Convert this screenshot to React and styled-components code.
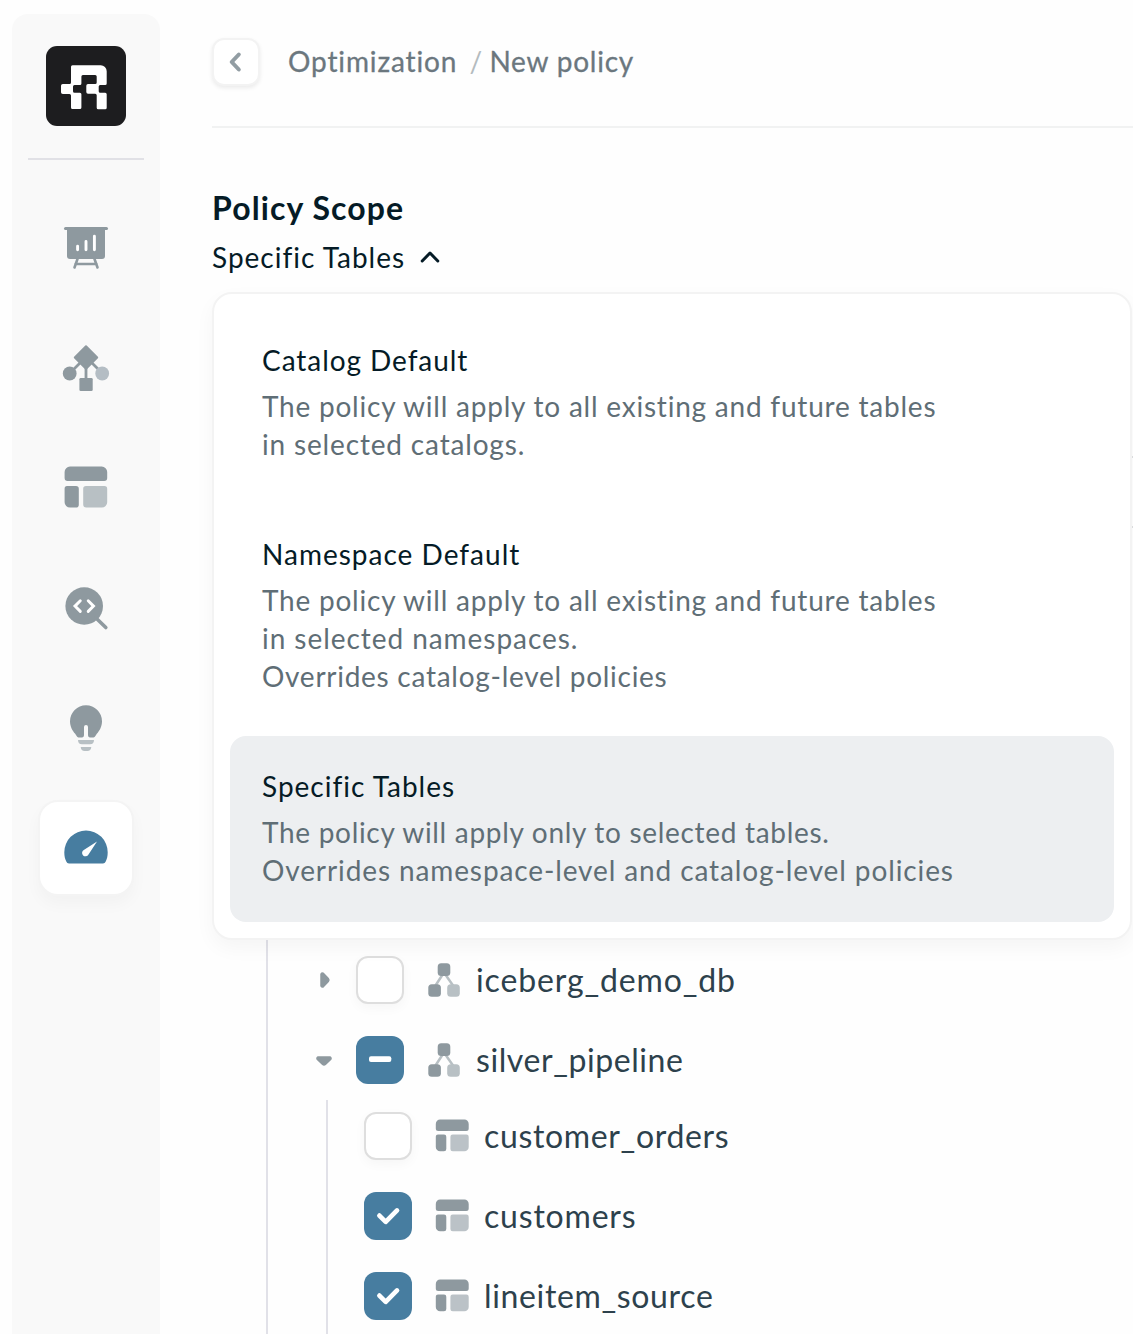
import React from 'react';
import styled, { createGlobalStyle } from 'styled-components';

const GlobalStyle = createGlobalStyle`
  * {
    box-sizing: border-box;
  }

  body {
    margin: 0;
    background: #fefefe;
    font-family: Lato, 'Open Sans', sans-serif;
    font-variant-ligatures: none;
  }

  svg {
    display: block;
    flex: none;
  }
`;

const Page = styled.div`
  display: flex;
  height: 1334px;
  padding-left: 12px;
  overflow: hidden;
`;

const Sidebar = styled.aside`
  display: flex;
  flex: none;
  flex-direction: column;
  align-items: center;
  width: 148px;
  margin-top: 14px;
  padding-top: 32px;
  border-radius: 16px 16px 0 0;
  background: #f9f9f9;
`;

const SidebarDivider = styled.div`
  width: 116px;
  height: 2px;
  margin: 32px 0 40px;
  background: #e1e1e6;
`;

const Nav = styled.nav`
  display: flex;
  flex-direction: column;
  gap: 24px;
`;

const NavItem = styled.a`
  display: flex;
  align-items: center;
  justify-content: center;
  width: 96px;
  height: 96px;
  border: 2px solid ${({ $active }) => ($active ? '#f4f4f4' : 'transparent')};
  border-radius: 20px;
  background: ${({ $active }) => ($active ? '#fff' : 'transparent')};
  box-shadow: ${({ $active }) => ($active ? '0 8px 16px rgba(0, 0, 0, 0.03)' : 'none')};
`;

const Main = styled.main`
  flex: 1;
  min-width: 0;
  padding-left: 52px;
`;

const Header = styled.header`
  display: flex;
  align-items: center;
  height: 128px;
  padding-bottom: 2px;
  border-bottom: 2px solid #f1f2f2;
`;

const BackButton = styled.button`
  width: 48px;
  height: 48px;
  padding: 0;
  border: 2px solid #f3f3f3;
  border-radius: 12px;
  background: #fff;
  box-shadow: 0 2px 4px rgba(0, 0, 0, 0.08);
`;

const Breadcrumbs = styled.div`
  display: flex;
  gap: 12px;
  margin: -2px 0 0 28px;
  font-size: 28px;
  line-height: 38px;
  color: #6b777e;
`;

const Crumb = styled.span`
  letter-spacing: ${({ $spacing }) => $spacing}px;
  -webkit-text-stroke: 0.3px #6b777e;
`;

const Slash = styled.span`
  width: 8px;
  color: #b4bbbf;
`;

const Scope = styled.section`
  position: relative;
  height: 164px;
  padding-top: 60px;
`;

const Title = styled.h1`
  margin: 0;
  font-size: 32px;
  font-weight: 700;
  line-height: 40px;
  letter-spacing: 1.1px;
  color: #051b26;
`;

const ScopeToggle = styled.div`
  display: flex;
  align-items: center;
  gap: 13px;
  height: 38px;
  margin-top: 10px;
  color: #051b26;
`;

const Label = styled.span`
  font-size: 28px;
  line-height: 38px;
  letter-spacing: ${({ $spacing }) => $spacing}px;
  white-space: nowrap;
`;

const Menu = styled.div`
  position: absolute;
  top: 164px;
  left: 0;
  z-index: 1;
  display: flex;
  flex-direction: column;
  gap: 8px;
  width: 920px;
  padding: 16px;
  border: 2px solid #f3f3f3;
  border-radius: 20px;
  background: #fff;
  box-shadow: 0 8px 20px rgba(0, 0, 0, 0.04);
`;

const Option = styled.div`
  display: flex;
  flex-direction: column;
  padding: 31px 32px 33px;
  border-radius: 16px;
  background: ${({ $selected }) => ($selected ? '#edeff1' : 'transparent')};
  color: #051b26;
`;

const Description = styled.div`
  display: flex;
  flex-direction: column;
  margin-top: 8px;
  color: #5f6e76;
`;

const FilterField = styled.div`
  width: 1200px;
  height: 72px;
  margin-top: 164px;
  border: 2px solid #dedfe1;
  border-radius: 12px;
`;

const Tree = styled.div`
  margin-left: 54px;
  padding-top: 412px;
  border-left: 2px solid #e1e1e8;
`;

const Branch = styled.div`
  display: flex;
  align-items: center;
  height: 80px;
  padding-left: 44px;
`;

const Leaves = styled.div`
  display: flex;
  flex-direction: column;
  gap: 8px;
  height: 260px;
  margin-left: 58px;
  border-left: 2px solid #e1e1e8;
`;

const Leaf = styled.div`
  display: flex;
  flex: none;
  align-items: center;
  height: 72px;
  padding-left: 36px;
`;

const Checkbox = styled.span`
  display: flex;
  flex: none;
  width: 48px;
  height: 48px;
  margin: 0 22px 0 ${({ $indent }) => $indent || 0}px;
  border: ${({ $filled }) => ($filled ? 'none' : '2px solid #dedede')};
  border-radius: 12px;
  background: ${({ $filled }) => ($filled ? '#477da0' : '#fff')};
  box-shadow: ${({ $filled }) => ($filled ? 'none' : '0 4px 12px rgba(0, 0, 0, 0.035)')};
`;

const NodeName = styled.span`
  margin-left: 14px;
  font-size: 32px;
  line-height: 40px;
  letter-spacing: ${({ $spacing }) => $spacing}px;
  color: #2d414c;
`;

const DARK = '#8e999f';
const LIGHT = '#b8c0c4';

const Logo = () => (
  <svg width="80" height="80" viewBox="0 0 80 80">
    <rect width="80" height="80" rx="11" fill="#1d1d1f" />
    <g fill="#fff">
      <path d="M26.5 19.3H54.7a6 6 0 0 1 6 6V37.5q0 1.5-1.5 1.5H54.2q-1.5 0-1.5 1.5V45.2q0 1.5 1.5 1.5H59.2q1.5 0 1.5 1.5V61.8q0 1.5-1.5 1.5H52.2q-1.5 0-1.5-1.5V49.2q0-1.5-1.5-1.5H42q-1.7 0-1.7-1.7V39.7q0-1.7 1.7-1.7H49.2q1.5 0 1.5-1.5V30.5q0-1.5-1.5-1.5H36.9q-1.5 0-1.5 1.5V37.5q0 1.5-1.5 1.5H28.5q-1.5 0-1.5 1.5V45.2q0 1.5 1.5 1.5H33.9q1.5 0 1.5 1.5V61.5q0 1.5-1.5 1.5H26.5q-1.5 0-1.5-1.5V49.5q0-1.5-1.5-1.5H16.8q-1.8 0-1.8-1.8V39.8q0-1.8 1.8-1.8H23.5q1.5 0 1.5-1.5V20.8q0-1.5 1.5-1.5z" />
    </g>
  </svg>
);

const DashboardIcon = () => (
  <svg width="48" height="48" viewBox="0 0 48 48" fill="none">
    <path d="M5 5h38v27a3 3 0 0 1-3 3H8a3 3 0 0 1-3-3z" fill={DARK} />
    <path d="M3.5 4.5h41" stroke={DARK} strokeWidth="3" strokeLinecap="round" />
    <path d="M15.5 35l-3 8.5M32.5 35l3 8.5M13.5 40h21" stroke={DARK} strokeWidth="2.6" strokeLinecap="round" />
    <path d="M15.6 22.3v3.5M24 17.5v8.3M32.4 12.3v13.5" stroke="#fff" strokeWidth="2.9" strokeLinecap="round" />
  </svg>
);

const LineageIcon = () => (
  <svg width="48" height="48" viewBox="0 0 48 48">
    <path d="M18 19l-9 9M24 22v14M30 19l9 9" stroke={DARK} strokeWidth="2.8" />
    <path d="M24 2.3l11.2 11.2L24 24.7 12.8 13.5z" fill={DARK} stroke={DARK} strokeWidth="2" strokeLinejoin="round" />
    <circle cx="7.7" cy="29.5" r="6.9" fill={DARK} />
    <circle cx="40.2" cy="29.5" r="6.9" fill="#b4bdc4" />
    <rect x="17.4" y="34" width="13.3" height="13" rx="1.3" fill={DARK} />
  </svg>
);

const CatalogIcon = () => (
  <svg width="48" height="48" viewBox="0 0 48 48">
    <path d="M8 2.6h31.7a5.5 5.5 0 0 1 5.5 5.5v6q0 3-3 3h-36.6q-3 0-3-3v-6a5.5 5.5 0 0 1 5.4-5.5z" fill={DARK} />
    <path d="M5 22h9q2.8 0 2.8 2.8v16q0 2.8-2.8 2.8h-6a5.4 5.4 0 0 1-5.4-5.4v-13.4q0-2.8 2.4-2.8z" fill={DARK} />
    <path d="M24 22h18.5q2.7 0 2.7 2.7v13.5a5.4 5.4 0 0 1-5.4 5.4h-15.6q-3 0-3-3v-15.8q0-2.8 2.8-2.8z" fill={LIGHT} />
  </svg>
);

const QueryIcon = () => (
  <svg width="48" height="48" viewBox="0 0 48 48" fill="none" strokeLinecap="round">
    <circle cx="22.2" cy="22" r="18.8" fill={DARK} />
    <path d="M34 34l9.8 9.5" stroke={DARK} strokeWidth="3.6" />
    <path d="M18.3 16.8l-5.3 5.3 5.3 5.3M26.2 16.8l5.3 5.3-5.3 5.3" stroke="#fff" strokeWidth="2.9" />
  </svg>
);

const InsightsIcon = () => (
  <svg width="48" height="48" viewBox="0 0 48 48">
    <path d="M24 1.2a16 16 0 0 0-16 16c0 5.5 2.5 9.5 5.2 12.6 1.2 1.5 1.5 3.6 3.3 3.6h3.7q1.8-.3 1.8-2.2v-8.2a2 2 0 0 1 4 0v8.2q0 1.9 1.8 2.2h3.7c1.8 0 2.1-2.1 3.3-3.6 2.7-3.1 5.2-7.1 5.2-12.6a16 16 0 0 0-16-16z" fill={DARK} />
    <path d="M16 36h16q0 4.2-4 4.2h-8q-4 0-4-4.2zM18.7 43h10.6q-.3 3.9-4 3.9h-2.6q-3.7 0-4-3.9z" fill={LIGHT} />
  </svg>
);

const OptimizationIcon = () => (
  <svg width="48" height="48" viewBox="0 0 48 48">
    <path d="M24 6.5A21.7 21.7 0 0 0 2.3 28.2c0 3.8.7 6.9 2 9.3.6 1.2 1.4 1.9 2.7 1.9h34c1.3 0 2.1-.7 2.7-1.9 1.3-2.4 2-5.5 2-9.3A21.7 21.7 0 0 0 24 6.5z" fill="#477da0" />
    <path d="M35 17.4L21.8 26a3.4 3.4 0 1 0 4.7 4.5z" fill="#fff" />
  </svg>
);

const NamespaceIcon = () => (
  <svg width="36" height="36" viewBox="0 0 36 36">
    <path d="M17 12l-7.5 11.5M19 12l8 11.5" stroke={LIGHT} strokeWidth="2.5" />
    <rect x="11.7" y="1.3" width="12.6" height="12.6" rx="3.5" fill={DARK} />
    <rect x="2.3" y="22.2" width="12.6" height="12.5" rx="3.5" fill={DARK} />
    <rect x="21.2" y="22.2" width="12.6" height="12.5" rx="3.5" fill={LIGHT} />
  </svg>
);

const TableIcon = () => (
  <svg width="36" height="36" viewBox="0 0 36 36">
    <path d="M6.1 1.6h24.3a4.3 4.3 0 0 1 4.3 4.3v4.5q0 2.5-2.5 2.5h-27.9q-2.5 0-2.5-2.5v-4.5a4.3 4.3 0 0 1 4.3-4.3z" fill={DARK} />
    <path d="M4 16.4h6q2.3 0 2.3 2.3v12.2q0 2.3-2.3 2.3h-3.9a4.3 4.3 0 0 1-4.3-4.3v-10.3q0-2.2 2.2-2.2z" fill={DARK} />
    <path d="M18.7 16.4h13.7q2.3 0 2.3 2.3v10.2a4.3 4.3 0 0 1-4.3 4.3h-11.7q-2.3 0-2.3-2.3v-12.2q0-2.3 2.3-2.3z" fill="#bbc2c7" />
  </svg>
);

const Caret = ({ open }) => (
  <svg width="24" height="24" viewBox="0 0 24 24">
    <path
      d={open
        ? 'M6 9h12q1.8 1 .6 2.5l-5 4.8q-1.6 1.4-3.2 0l-5-4.8Q4.2 10 6 9z'
        : 'M9 6v12q1 1.8 2.5.6l4.8-5q1.4-1.6 0-3.2l-4.8-5Q10 4.2 9 6z'}
      fill={DARK}
      stroke={DARK}
      strokeWidth="1.5"
      strokeLinejoin="round"
    />
  </svg>
);

const CheckMark = () => (
  <svg width="48" height="48" viewBox="0 0 48 48" fill="none">
    <path d="M15.4 23.6l6.3 6.2 11.3-11.4" stroke="#fff" strokeWidth="4.7" strokeLinecap="round" strokeLinejoin="round" />
  </svg>
);

const MinusMark = () => (
  <svg width="48" height="48" viewBox="0 0 48 48">
    <rect x="13" y="20.3" width="22.3" height="5.7" rx="2" fill="#fff" />
  </svg>
);

const navItems = [
  { id: 'dashboard', Icon: DashboardIcon },
  { id: 'lineage', Icon: LineageIcon },
  { id: 'catalog', Icon: CatalogIcon },
  { id: 'query', Icon: QueryIcon },
  { id: 'insights', Icon: InsightsIcon },
  { id: 'optimization', Icon: OptimizationIcon, active: true },
];

const options = [
  {
    title: 'Catalog Default',
    spacing: 0.94,
    lines: [
      { text: 'The policy will apply to all existing and future tables', spacing: 0.78 },
      { text: 'in selected catalogs.', spacing: 0.84 },
    ],
  },
  {
    title: 'Namespace Default',
    spacing: 1.01,
    lines: [
      { text: 'The policy will apply to all existing and future tables', spacing: 0.78 },
      { text: 'in selected namespaces.', spacing: 0.95 },
      { text: 'Overrides catalog-level policies', spacing: 0.73 },
    ],
  },
  {
    title: 'Specific Tables',
    spacing: 1,
    selected: true,
    lines: [
      { text: 'The policy will apply only to selected tables.', spacing: 0.7 },
      { text: 'Overrides namespace-level and catalog-level policies', spacing: 0.89 },
    ],
  },
];

const tables = [
  { name: 'customer_orders', spacing: 0.65, checked: false },
  { name: 'customers', spacing: 0.8, checked: true },
  { name: 'lineitem_source', spacing: 0.65, checked: true },
];

const App = () => (
  <Page>
    <GlobalStyle />
    <Sidebar>
      <Logo />
      <SidebarDivider />
      <Nav>
        {navItems.map(({ id, Icon, active }) => (
          <NavItem key={id} $active={active}>
            <Icon />
          </NavItem>
        ))}
      </Nav>
    </Sidebar>
    <Main>
      <Header>
        <BackButton>
          <svg width="44" height="44" viewBox="0 0 44 44" fill="none">
            <path d="M24.8 14.5L17.7 22l7.1 7.5" stroke="#929da3" strokeWidth="4" strokeLinecap="round" strokeLinejoin="round" />
          </svg>
        </BackButton>
        <Breadcrumbs>
          <Crumb $spacing={0.88}>Optimization</Crumb>
          <Slash>/</Slash>
          <Crumb $spacing={0.78}>New policy</Crumb>
        </Breadcrumbs>
      </Header>
      <Scope>
        <Title>Policy Scope</Title>
        <ScopeToggle>
          <Label $spacing={1}>Specific Tables</Label>
          <svg width="24" height="24" viewBox="0 0 24 24" fill="none">
            <path d="M4.2 16l7.8-8 7.8 8" stroke="#051b26" strokeWidth="3" strokeLinecap="round" strokeLinejoin="round" />
          </svg>
        </ScopeToggle>
        <Menu>
          {options.map((option) => (
            <Option key={option.title} $selected={option.selected}>
              <Label $spacing={option.spacing}>{option.title}</Label>
              <Description>
                {option.lines.map((line) => (
                  <Label key={line.text} $spacing={line.spacing}>{line.text}</Label>
                ))}
              </Description>
            </Option>
          ))}
        </Menu>
      </Scope>
      <FilterField />
      <Tree>
        <Branch>
          <Caret />
          <Checkbox $indent={20} />
          <NamespaceIcon />
          <NodeName $spacing={0.87}>iceberg_demo_db</NodeName>
        </Branch>
        <Branch>
          <Caret open />
          <Checkbox $indent={20} $filled>
            <MinusMark />
          </Checkbox>
          <NamespaceIcon />
          <NodeName $spacing={0.58}>silver_pipeline</NodeName>
        </Branch>
        <Leaves>
          {tables.map((table) => (
            <Leaf key={table.name}>
              <Checkbox $filled={table.checked}>{table.checked && <CheckMark />}</Checkbox>
              <TableIcon />
              <NodeName $spacing={table.spacing}>{table.name}</NodeName>
            </Leaf>
          ))}
        </Leaves>
      </Tree>
    </Main>
  </Page>
);

export default App;
